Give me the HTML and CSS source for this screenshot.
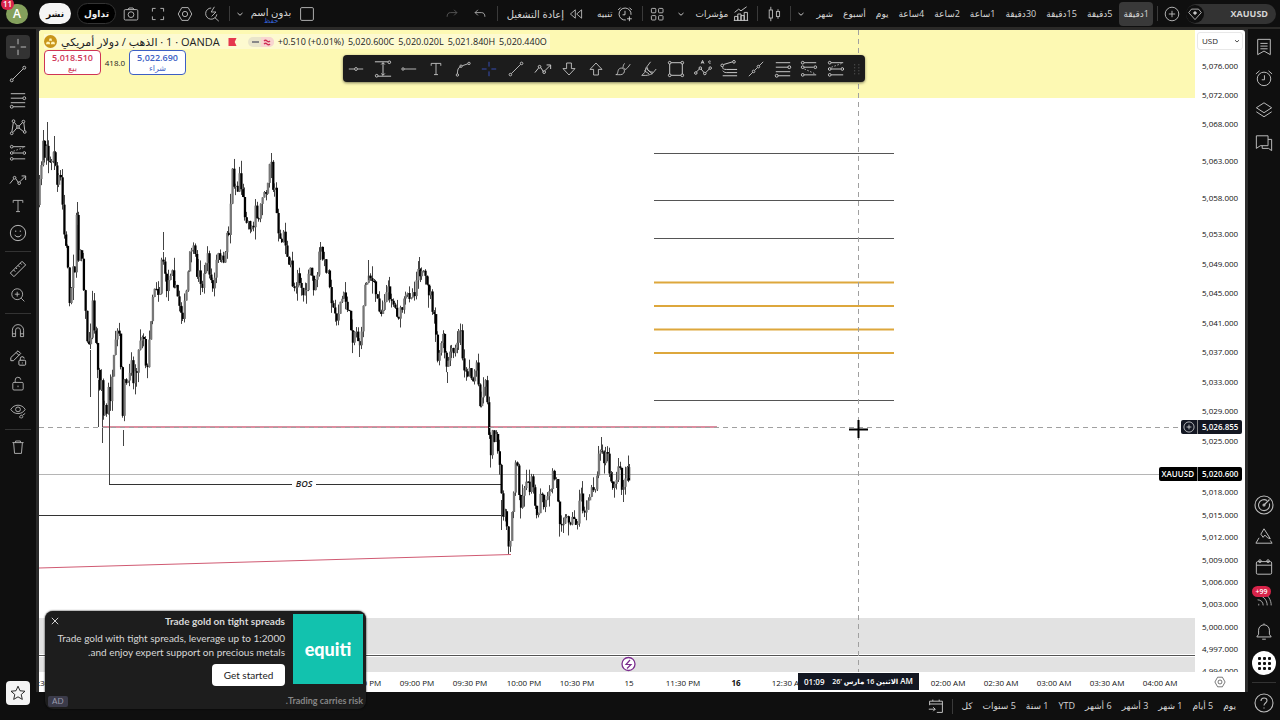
FILE: index.html
```html
<!DOCTYPE html>
<html lang="ar">
<head>
<meta charset="utf-8">
<title>XAUUSD</title>
<link rel="stylesheet" href="styles.css">
</head>
<body>
<svg class="defs" aria-hidden="true">
  <symbol id="cross" viewBox="0 0 20 20"><path d="M10 1v6M10 13v6M1 10h6M13 10h6"/></symbol>
  <symbol id="trend" viewBox="0 0 20 20"><path d="M4.2 15.8L15.8 4.2"/><circle cx="3" cy="17" r="1.6"/><circle cx="17" cy="3" r="1.6"/></symbol>
  <symbol id="fib" viewBox="0 0 20 20"><path d="M2 3h16M2 8h13.500M2 13h16M4.500 17.500H18"/><circle cx="17" cy="8" r="1.600"/><circle cx="3" cy="17.500" r="1.600"/></symbol>
  <symbol id="xabcd" viewBox="0 0 20 20"><path d="M3.200 15.500L4.800 5M6 4.800L9 8.800M11 11l5 4M11.200 9L15 5M16.500 5.500l1 8.500M4.500 16L8.800 11"/><circle cx="3" cy="17" r="1.500"/><circle cx="5" cy="3.500" r="1.500"/><circle cx="10" cy="10" r="1.500"/><circle cx="16" cy="4" r="1.500"/><circle cx="17.500" cy="15.500" r="1.500"/></symbol>
  <symbol id="shortpos" viewBox="0 0 20 20"><path d="M4.500 3H18M4.500 10H15M4.500 16.500H18"/><path d="M5 8l11-4" stroke-dasharray="1.500 2"/><circle cx="3" cy="3" r="1.500"/><circle cx="3" cy="10" r="1.500"/><circle cx="17" cy="10" r="1.500"/><circle cx="3" cy="16.500" r="1.500"/></symbol>
  <symbol id="longpos" viewBox="0 0 20 20"><path d="M4.500 3H18M4.500 8H15M4.500 16.500H18"/><path d="M5 10l11 5" stroke-dasharray="1.500 2"/><circle cx="3" cy="3" r="1.500"/><circle cx="3" cy="8" r="1.500"/><circle cx="17" cy="8" r="1.500"/><circle cx="3" cy="16.500" r="1.500"/></symbol>
  <symbol id="zig" viewBox="0 0 20 20"><path d="M1 14l4-5M7.500 8.500l3 4.500M12 12l6-6M14 5.500h4.500V10"/><circle cx="6.200" cy="7.500" r="1.500"/><circle cx="11.300" cy="13.500" r="1.500"/></symbol>
  <symbol id="text" viewBox="0 0 20 20"><path d="M4 6V3h12v3M10 3v14M7.500 17h5"/></symbol>
  <symbol id="smile" viewBox="0 0 20 20"><circle cx="10" cy="10" r="8.500"/><path d="M6.500 12c1 3 6 3 7 0"/><path d="M7 8h1M12 8h1" stroke-width="1.800"/></symbol>
  <symbol id="ruler" viewBox="0 0 20 20"><path d="M1.500 14.500l13-13 4 4-13 13zM5 11l2 2M7.500 8.500l1.500 1.500M10 6l2 2M12.500 3.500L14 5"/></symbol>
  <symbol id="zoomin" viewBox="0 0 20 20"><circle cx="9" cy="9" r="6.800"/><path d="M14 14l4 4M9 6v6M6 9h6"/></symbol>
  <symbol id="magnet" viewBox="0 0 20 20"><path d="M3 17V9a7 7 0 0 1 14 0v8h-4V9a3 3 0 0 0-6 0v8zM3 13.500h4M13 13.500h4"/></symbol>
  <symbol id="penlock" viewBox="0 0 20 20"><path d="M2 9.500L10 2l3 3-8 8H2zM8 4l3 3"/><rect x="11" y="12.500" width="7.500" height="5.500" rx="1"/><path d="M12.500 12.500v-1.500a2.200 2.200 0 0 1 4.400-.5M14.800 15v1"/></symbol>
  <symbol id="lock" viewBox="0 0 20 20"><rect x="3.500" y="8" width="13" height="9.500" rx="1.500"/><path d="M6.500 8V5.500a3.500 3.500 0 0 1 7-.8M10 12v2"/></symbol>
  <symbol id="eye" viewBox="0 0 20 20"><path d="M1 8c4-7 14-7 18 0-4 7-14 7-18 0z"/><circle cx="10" cy="8" r="3"/><path d="M12 18c0-3 4-4 4-1s-4 1-4 1M16 15l3-2"/></symbol>
  <symbol id="trash" viewBox="0 0 20 20"><path d="M3 4.500h14M7 4.500v-2h6v2M4.500 4.500l1.200 13.500h8.600l1.200-13.500"/></symbol>
  <symbol id="star" viewBox="0 0 20 20"><path d="M10 1.500l2.500 5.700 6.200.6-4.700 4.100 1.400 6.100L10 14.800 4.600 18 6 11.900 1.300 7.800l6.200-.6z"/></symbol>
  <symbol id="hline" viewBox="0 0 20 20"><path d="M1 10h7M12 10h7"/><circle cx="10" cy="10" r="1.800"/></symbol>
  <symbol id="range" viewBox="0 0 20 20"><path d="M1 2h14.500M4.500 18H19M10 3v14M8 5l2-2 2 2M8 15l2 2 2-2"/><circle cx="17" cy="2.500" r="1.500"/><circle cx="3" cy="17.500" r="1.500"/></symbol>
  <symbol id="hray" viewBox="0 0 20 20"><path d="M4 10h15"/><circle cx="2.500" cy="10" r="1.500"/></symbol>
  <symbol id="curve" viewBox="0 0 20 20"><path d="M3 16c0-5 1-8 4-9M9 6l7-2.500"/><circle cx="3" cy="17.500" r="1.500"/><circle cx="7.500" cy="6.500" r="1.500"/><circle cx="17.500" cy="3" r="1.500"/></symbol>
  <symbol id="down" viewBox="0 0 20 20"><path d="M7 2.500h6v7h4.500l-7.500 8-7.500-8H7z"/></symbol>
  <symbol id="up" viewBox="0 0 20 20"><path d="M7 17.500h6v-7h4.500l-7.500-8-7.500 8H7z"/></symbol>
  <symbol id="brush" viewBox="0 0 20 20"><path d="M1 17c4 0 1-7 6-8 4-1 6 3 4 6-2 3-6 2-10 2zM10 9c0-3 1-5 2-6M12 11c3-1 5-4 7-7M11 10l1-1"/></symbol>
  <symbol id="marker" viewBox="0 0 20 20"><path d="M6 9l8 7c-3 1-5 2-8 2H1l4-4zM6 9l6-8M14 16l5-6M4 12l6 4M8 8c0 4 3 6 7 6"/></symbol>
  <symbol id="rect" viewBox="0 0 20 20"><rect x="3" y="3" width="14" height="14"/><g class="node"><circle cx="3" cy="3" r="1.500"/><circle cx="17" cy="3" r="1.500"/><circle cx="3" cy="17" r="1.500"/><circle cx="17" cy="17" r="1.500"/></g></symbol>
  <symbol id="waves" viewBox="0 0 20 20"><path d="M2 14l5-5 5 6 6-6M8 4l1.500-3.500L11 4M8.500 3h2M18.500 1.500c-3-2-3 3 0 2"/><g class="node"><circle cx="2" cy="14.500" r="1.400"/><circle cx="7" cy="9" r="1.400"/><circle cx="12" cy="15" r="1.400"/><circle cx="18" cy="9" r="1.400"/></g></symbol>
  <symbol id="fan" viewBox="0 0 20 20"><path d="M4 5l10-3M3 8c0 2 1 2.500 4 2.500h12M3 12c1 1 2 2 4 2h12M3 17.500h16"/><circle cx="2.500" cy="6" r="1.500"/><circle cx="15.500" cy="2" r="1.500"/></symbol>
  <symbol id="xline" viewBox="0 0 20 20"><path d="M1 19l5-5M8.500 11.500l3-3M14 6l5-5"/><circle cx="7" cy="13" r="1.600"/><circle cx="13" cy="7" r="1.600"/></symbol>
  <symbol id="camera" viewBox="0 0 20 20"><rect x="1.500" y="4.500" width="17" height="13" rx="1.500"/><path d="M6 4.500l1.500-2h5l1.500 2"/><circle cx="10" cy="10.800" r="3.600"/></symbol>
  <symbol id="full" viewBox="0 0 20 20"><path d="M3 7V3h4M13 3h4v4M17 13v4h-4M7 17H3v-4"/></symbol>
  <symbol id="hex" viewBox="0 0 20 20"><path d="M6 2h8l4.500 8L14 18H6l-4.500-8z"/><circle cx="10" cy="10" r="3.300"/></symbol>
  <symbol id="flash" viewBox="0 0 20 20"><path d="M9 2.500a7 7 0 1 0 7 8M13.500 14.500L18.500 19M13 1L9 7.500h6L9.500 13"/></symbol>
  <symbol id="chev" viewBox="0 0 20 20"><path d="M5 8l5 4.500L15 8"/></symbol>
  <symbol id="square" viewBox="0 0 20 20"><rect x="2" y="2" width="16" height="16" rx="1.500"/></symbol>
  <symbol id="undo" viewBox="0 0 20 20"><path d="M7 4L3 8l4 4M3 8h9q5 0 5 6"/></symbol>
  <symbol id="redo" viewBox="0 0 20 20"><path d="M13 4l4 4-4 4M17 8H8q-5 0-5 6"/></symbol>
  <symbol id="rewind" viewBox="0 0 20 20"><path d="M9 4v12l-7-6zM18 4v12l-7-6z"/></symbol>
  <symbol id="alarm" viewBox="0 0 20 20"><path d="M11 17.500A7.500 7.500 0 1 1 17.500 11M10 6v5H7M1.500 5l3-3M15.500 2l3 3M15.500 13v6M12.500 16h6"/></symbol>
  <symbol id="clock" viewBox="0 0 20 20"><circle cx="10" cy="11" r="7.500"/><path d="M10.500 7v5H7.500M1 5.500L5 2M15 2l4 3.500"/></symbol>
  <symbol id="grid4" viewBox="0 0 20 20"><rect x="3" y="3" width="5.500" height="5.500" rx="1"/><rect x="12" y="3" width="5.500" height="5.500" rx="1"/><rect x="3" y="12" width="5.500" height="5.500" rx="1"/><rect x="12" y="12" width="5.500" height="5.500" rx="1"/></symbol>
  <symbol id="indic" viewBox="0 0 20 20"><path d="M2 8l5-4 3 2 7-5M2 18v-5h4v5M6 18v-8h4v8M10 18v-6h4v6M14 18V8h4v10M1 18h18"/></symbol>
  <symbol id="candle" viewBox="0 0 20 20"><rect x="4" y="5" width="4" height="10"/><rect x="13" y="7" width="4" height="6"/><path d="M6 1v4M6 15v4M15 4v3M15 13v3"/></symbol>
  <symbol id="plus" viewBox="0 0 20 20"><circle cx="10" cy="10" r="8.500"/><path d="M10 6v8M6 10h8"/></symbol>
  <symbol id="gem" viewBox="0 0 20 20"><path d="M5 3h10l4 5-9 10L1 8z"/><path d="M10 6v5M7.500 8.500h5" stroke-width="2"/></symbol>
  <symbol id="list" viewBox="0 0 20 20"><path d="M3 1.500h14v17l-7-4-7 4zM6 6h8M6 9h8M6 12h8"/></symbol>
  <symbol id="layers" viewBox="0 0 20 20"><path d="M10 2l8.500 5.500L10 13 1.500 7.500zM1.500 12l8.500 5.500 8.500-5.500"/></symbol>
  <symbol id="chat" viewBox="0 0 20 20"><path d="M1.500 2h13v11H6l-4.500 3zM14.500 6h4v12.500L15 16H8v-3"/></symbol>
  <symbol id="radar" viewBox="0 0 20 20"><circle cx="10" cy="10" r="9"/><path d="M13 5.500a5.500 5.500 0 1 0 2.300 3M10 10l5.500-5.500"/><circle cx="10" cy="10" r="1"/></symbol>
  <symbol id="mount" viewBox="0 0 20 20"><path d="M6.500 8L10 2l7 11-3-1-3-3-2 2.500zM4.500 12L1 18h18l-2-3"/></symbol>
  <symbol id="cal" viewBox="0 0 20 20"><rect x="1.500" y="4" width="17" height="14" rx="1.500"/><path d="M1.500 8h17"/><circle cx="5.500" cy="3.500" r="1.500"/><circle cx="14.500" cy="3.500" r="1.500"/></symbol>
  <symbol id="feed" viewBox="0 0 20 20"><path d="M3 17h1" stroke-width="2"/><path d="M2 11c4 0 7 3 7 7M5 6c5 1 9 6 9 12M9 2c6 3 10 9 10 16"/></symbol>
  <symbol id="bell" viewBox="0 0 20 20"><path d="M2 15.500h16l-2-3V8A6 6 0 0 0 4 8v4.500zM8 18h4M10 2V.5"/></symbol>
  <symbol id="help" viewBox="0 0 20 20"><circle cx="10" cy="10" r="9"/><path d="M7 8c0-4 6-4 6-.5 0 2.500-3 2.500-3 5M10 14.500v1"/></symbol>
  <symbol id="goto" viewBox="0 0 20 20"><path d="M2 9V4h16v14h-7M2 7.500h16M6 4V2M14 4V2M1 14h8M6.500 11.500L9 14l-2.500 2.500"/></symbol>
  <symbol id="grip" viewBox="0 0 20 20"><path d="M5 3h2M5 8h2M5 13h2M5 18h2M12 3h2M12 8h2M12 13h2M12 18h2"/></symbol>
  <symbol id="close" viewBox="0 0 20 20"><path d="M2 2l16 16M18 2L2 18"/></symbol>
</svg>

<header class="topbar">
  <button class="avatar" aria-label="A">A<span class="count">11</span></button>
  <button class="pill pill-light">نشر</button>
  <button class="pill pill-dark">تداول</button>
  <div class="tools">
    <button class="ico" aria-label="camera"><svg><use href="#camera"/></svg></button>
    <button class="ico" aria-label="fullscreen"><svg><use href="#full"/></svg></button>
    <button class="ico" aria-label="settings"><svg><use href="#hex"/></svg></button>
    <button class="ico" aria-label="search"><svg><use href="#flash"/></svg></button>
  </div>
  <i class="bar"></i>
  <button class="ico small" aria-label="menu"><svg><use href="#chev"/></svg></button>
  <button class="layout-name" dir="rtl">بدون اسم<span>حفظ</span></button>
  <button class="ico" aria-label="layout"><svg><use href="#square"/></svg></button>
  <span class="spring"></span>
  <button class="ico dim" aria-label="redo"><svg class="s14"><use href="#redo"/></svg></button>
  <button class="ico" aria-label="undo"><svg class="s14"><use href="#undo"/></svg></button>
  <i class="bar bar-gap"></i>
  <button class="lbl replay">إعادة التشغيل<svg class="s14"><use href="#rewind"/></svg></button>
  <button class="lbl alert">تنبيه<svg><use href="#alarm"/></svg></button>
  <i class="bar"></i>
  <button class="ico" aria-label="grid"><svg><use href="#grid4"/></svg></button>
  <button class="ico small" aria-label="more"><svg><use href="#chev"/></svg></button>
  <button class="lbl indic">مؤشرات<svg><use href="#indic"/></svg></button>
  <i class="bar"></i>
  <button class="ico wide" aria-label="candles"><svg><use href="#candle"/></svg></button>
  <i class="bar"></i>
  <button class="ico small" aria-label="intervals"><svg><use href="#chev"/></svg></button>
  <nav class="intervals">
    <button dir="rtl">شهر</button><button dir="rtl">أسبوع</button><button dir="rtl">يوم</button><button dir="rtl">4ساعة</button><button dir="rtl">2ساعة</button><button dir="rtl">1ساعة</button><button dir="rtl">30دقيقة</button><button dir="rtl">15دقيقة</button><button dir="rtl">5دقيقة</button><button dir="rtl" class="on">1دقيقة</button>
  </nav>
  <i class="bar"></i>
  <button class="ico" aria-label="add"><svg><use href="#plus"/></svg></button>
  <button class="symbol"><span class="gem"><svg class="s14"><use href="#gem"/></svg></span>XAUUSD</button>
</header>

<aside class="left">
  <div class="set set-a">
    <button class="on" aria-label="cross"><svg class="s18"><use href="#cross"/></svg></button>
    <button aria-label="line"><svg class="s18"><use href="#trend"/></svg></button>
    <button aria-label="fib"><svg class="s18"><use href="#fib"/></svg></button>
    <button aria-label="pattern"><svg class="s18"><use href="#xabcd"/></svg></button>
    <button aria-label="position"><svg class="s18"><use href="#shortpos"/></svg></button>
    <button aria-label="path"><svg class="s18"><use href="#zig"/></svg></button>
    <button aria-label="text"><svg class="s16"><use href="#text"/></svg></button>
    <button aria-label="emoji"><svg class="s18"><use href="#smile"/></svg></button>
  </div>
  <hr>
  <div class="set set-b">
    <button aria-label="measure"><svg class="s18"><use href="#ruler"/></svg></button>
    <button aria-label="zoom"><svg class="s16"><use href="#zoomin"/></svg></button>
  </div>
  <hr>
  <div class="set set-c">
    <button aria-label="magnet"><svg class="s16"><use href="#magnet"/></svg></button>
    <button aria-label="stay in drawing"><svg class="s18"><use href="#penlock"/></svg></button>
    <button aria-label="lock"><svg class="s16"><use href="#lock"/></svg></button>
    <button aria-label="hide"><svg class="s16"><use href="#eye"/></svg></button>
  </div>
  <hr>
  <button aria-label="delete"><svg class="s16"><use href="#trash"/></svg></button>
  <button class="fav" aria-label="favorites"><svg class="s16"><use href="#star"/></svg></button>
</aside>

<main class="center">
  <section class="panel">
    <svg class="plot" role="img" aria-label="XAUUSD">
      <rect width="100%" height="68" fill="#fdf9b3"/>
      <rect y="588" width="100%" height="54" fill="#e2e2e2"/>
      <path d="M0 625.500H4000" stroke="#fff" stroke-width="3"/>
      <path d="M0 625.500H4000" stroke="#555"/>
      <path d="M0 444.500H4000" stroke="#b5b5b5"/>
      <path d="M70 454.500H253M277 454.500H462M0 485.500H464" stroke="#333"/>
      <path d="M64 397H678" stroke="#dc8ea0" stroke-width="2"/>
      <path d="M0 538L472 524.500" stroke="#d05a72"/>
      <path d="M615 123.500h240M615 170.500h240M615 208.500h240M615 370.500h240" stroke="#555"/>
      <path d="M615 252.500h240M615 276h240M615 299.500h240M615 323h240" stroke="#dda73c" stroke-width="2"/>
      <text class="bos" x="265" y="457" text-anchor="middle">BOS</text>
      <g id="candles"></g>
      <path d="M0 397.500H4000M819.500 0V642" stroke="#a0a0a0" stroke-dasharray="5 4"/>
      <path d="M819.500 390v18M810 399.500h19" stroke="#000" stroke-width="2"/>
      <circle cx="589.500" cy="634" r="6.500" fill="#fff" stroke="#7b2d8e" stroke-width="1.300"/>
      <path d="M591 630l-4 4.500h5l-4 4" fill="none" stroke="#7b2d8e" stroke-width="1.200"/>
    </svg>
    <svg class="prices" id="prices"></svg>
    <svg class="times" id="times"></svg>
    <div class="corner"><svg class="s12"><use href="#hex"/></svg></div>

    <div class="legend">
      <div class="legend-row">
        <svg class="gold" viewBox="0 0 12 12"><circle cx="6" cy="6" r="6" fill="#c8951a"/><path d="M4.500 5.200l.6-2h1.800l.6 2zM1.800 8.500l.7-2.300h2.600l.6 2.300zM6.300 8.500l.6-2.300h2.600l.7 2.300z" fill="#fff4b8"/></svg>
        <h1><bdi>الذهب / دولار أمريكي</bdi> · 1 · OANDA</h1>
        <svg class="flag" viewBox="0 0 9 9"><path d="M0 0h9L7 4.500 9 9H0z" fill="#e5374d"/></svg>
        <svg class="status" viewBox="0 0 26 10"><rect width="26" height="10" rx="5" fill="#e9e5ca"/><path d="M13 0h8a5 5 0 0 1 0 10h-8z" fill="#f8d5d0"/><path d="M4 5h7" stroke="#888" stroke-width="2"/><path d="M16 4q1.500-1.500 3 0t3 0M16 7q1.500-1.500 3 0t3 0" fill="none" stroke="#cf2f55" stroke-width="1.300"/></svg>
        <span class="vals"><span>+0.510 (+0.01%)</span><span>5,020.600C</span><span>5,020.020L</span><span>5,021.840H</span><span>5,020.440O</span></span>
      </div>
      <div class="deal">
        <button class="sell">5,018.510<span>بيع</span></button>
        <span class="spread">418.0</span>
        <button class="buy">5,022.690<span>شراء</span></button>
      </div>
    </div>

    <div class="drawbar">
      <button aria-label="horizontal line"><svg><use href="#hline"/></svg></button>
      <button aria-label="price range"><svg class="s18"><use href="#range"/></svg></button>
      <button aria-label="ray"><svg><use href="#hray"/></svg></button>
      <button aria-label="text"><svg><use href="#text"/></svg></button>
      <button aria-label="curve"><svg><use href="#curve"/></svg></button>
      <button class="active" aria-label="cross"><svg><use href="#cross"/></svg></button>
      <button aria-label="trend"><svg><use href="#trend"/></svg></button>
      <button aria-label="path"><svg class="s18"><use href="#zig"/></svg></button>
      <button aria-label="down"><svg><use href="#down"/></svg></button>
      <button aria-label="up"><svg><use href="#up"/></svg></button>
      <button aria-label="brush"><svg><use href="#brush"/></svg></button>
      <button aria-label="highlighter"><svg><use href="#marker"/></svg></button>
      <button aria-label="rectangle"><svg class="s18"><use href="#rect"/></svg></button>
      <button aria-label="abc"><svg class="s18"><use href="#waves"/></svg></button>
      <button aria-label="speed fan"><svg class="s18"><use href="#fan"/></svg></button>
      <button aria-label="extended"><svg><use href="#xline"/></svg></button>
      <button aria-label="fib"><svg class="s18"><use href="#fib"/></svg></button>
      <button aria-label="long"><svg class="s18"><use href="#longpos"/></svg></button>
      <button aria-label="short"><svg class="s18"><use href="#shortpos"/></svg></button>
      <span class="grip"><svg class="s12"><use href="#grip"/></svg></span>
    </div>

    <select class="currency" aria-label="currency"><option>USD</option></select>
    <svg class="currency-arrow s8"><use href="#chev"/></svg>
    <div class="tag tag-cross"><svg class="s12"><use href="#plus"/></svg><b>5,026.855</b></div>
    <div class="tag tag-last"><span>XAUUSD</span><b>5,020.600</b></div>
    <div class="time-tag"><span>01:09</span><span><bdi dir="rtl">الاثنين 16 مارس '26</bdi> AM</span></div>
  </section>
  <footer class="bottom">
    <button aria-label="go to"><svg><use href="#goto"/></svg></button>
    <i class="bar"></i>
    <button dir="rtl">كل</button><button dir="rtl">5 سنوات</button><button dir="rtl">1 سنة</button><button>YTD</button><button dir="rtl">6 أشهر</button><button dir="rtl">3 أشهر</button><button dir="rtl">1 شهر</button><button dir="rtl">5 أيام</button><button dir="rtl">يوم</button>
  </footer>
</main>

<aside class="right">
  <button aria-label="watchlist"><svg class="s18"><use href="#list"/></svg></button>
  <button aria-label="alerts"><svg class="s18"><use href="#clock"/></svg></button>
  <button aria-label="objects"><svg class="s18"><use href="#layers"/></svg></button>
  <button aria-label="chat"><svg class="s18"><use href="#chat"/></svg></button>
  <span class="spring"></span>
  <button aria-label="screener"><svg class="s20"><use href="#radar"/></svg></button>
  <button aria-label="pine"><svg class="s18"><use href="#mount"/></svg></button>
  <button aria-label="calendar"><svg class="s18"><use href="#cal"/></svg></button>
  <button class="feed" aria-label="feed"><svg class="s16"><use href="#feed"/></svg><span class="badge">+99</span></button>
  <button aria-label="notifications"><svg class="s18"><use href="#bell"/></svg></button>
  <button class="apps" aria-label="apps"><i></i><i></i><i></i><i></i><i></i><i></i><i></i><i></i><i></i></button>
  <hr>
  <button aria-label="help"><svg class="s20"><use href="#help"/></svg></button>
</aside>

<section class="ad">
  <button class="ad-close" aria-label="close"><svg class="s8"><use href="#close"/></svg></button>
  <div class="ad-copy">
    <h2>Trade gold on tight spreads</h2>
    <p dir="rtl">Trade gold with tight spreads, leverage up to 1:2000<br>and enjoy expert support on precious metals.</p>
    <button class="cta">Get started</button>
  </div>
  <div class="brand">equiti</div>
  <span class="ad-mark">AD</span>
  <small dir="rtl">Trading carries risk.</small>
</section>
<script src="chart.js"></script>
</body>
</html>
```
FILE: styles.css
```css
* { box-sizing: border-box; }
body {
  margin: 0;
  height: 100vh;
  overflow: hidden;
  display: grid;
  grid-template-columns: 36px 1fr 32px;
  grid-template-rows: 29px 1fr;
  background: #0f0f0f;
  color: #d6d6d6;
  font: 10px/12px "Open Sans", "Noto Sans", "DejaVu Sans", sans-serif;
}
.defs { position: absolute; width: 0; height: 0; }
button {
  margin: 0; padding: 0; border: 0; background: none;
  color: inherit; font: inherit; white-space: nowrap;
}
svg { display: block; }
button svg, .corner svg, .tag svg, .grip svg, .currency-arrow {
  width: 16px; height: 16px; flex: none;
  fill: none; stroke: currentColor; stroke-width: 1.1;
}
svg.s8 { width: 8px; height: 8px; stroke-width: 2; }
svg.s12 { width: 12px; height: 12px; }
svg.s14 { width: 14px; height: 14px; }
svg.s16 { width: 16px; height: 16px; }
svg.s18 { width: 18px; height: 18px; }
svg.s20 { width: 20px; height: 20px; }
.node { fill: #1c1c1c; }

.topbar {
  grid-column: 1 / -1;
  display: flex; align-items: center;
  padding: 0 4px 0 6px;
  border-bottom: 2px solid #2b2a28;
}
.avatar {
  position: relative; width: 22px; height: 20px; border-radius: 10px;
  background: #84a05c; color: #fff; font-size: 12px; font-weight: 600;
}
.count {
  position: absolute; left: -5px; top: -6px; width: 13px; height: 12px; border-radius: 6px;
  background: #d8244a; font-size: 8px; line-height: 12px;
}
.pill { height: 21px; border-radius: 11px; font-size: 9px; font-weight: 600; }
.pill-light { width: 32px; margin-left: 11px; background: #f5f5f5; color: #111; }
.pill-dark { width: 39px; margin-left: 6px; background: #000; border: 1px solid #333; color: #eee; }
.tools { display: flex; gap: 9px; margin: 0 8px 0 6px; }
.tools .ico { width: 18px; }
.ico { width: 28px; display: flex; justify-content: center; align-items: center; color: #c4c4c4; }
.ico.small { width: 20px; }
.ico.small svg { width: 10px; height: 10px; stroke-width: 2; }
.ico.wide { width: 32px; }
.dim { color: #666; }
.bar { width: 1px; height: 15px; background: #3a3a3a; flex: none; }
.bar-gap { margin-left: 3px; }
.layout-name { position: relative; width: 42px; height: 22px; padding-bottom: 4px; }
.layout-name span { position: absolute; left: 0; right: 0; top: 13px; color: #3462d8; font-size: 7px; line-height: 10px; }
.layout-name + .ico { width: 30px; }
.spring { flex: 1; }
.lbl { display: flex; align-items: center; gap: 5px; font-size: 9px; }
.replay { padding: 0 6px 0 9px; font-size: 10px; }
.alert { padding: 0 9px 0 8px; }
.indic { padding: 0 8px 0 4px; }
.intervals { display: flex; gap: 2px; font-size: 9px; margin-left: 1px; }
.intervals button { height: 24px; padding: 0 4px; border-radius: 4px; }
.intervals .on { background: #393939; margin: 0 4px 0 1px; }
.symbol {
  display: flex; align-items: center; justify-content: space-between;
  width: 90px; height: 20px; padding-right: 8px;
  border-radius: 10px; background: #333; font-size: 9px; font-weight: 700;
}
.gem { width: 18px; height: 18px; border-radius: 9px; background: #0f0f0f; display: grid; place-items: center; }

.left { display: flex; flex-direction: column; align-items: center; padding: 6px 0 15px; color: #bbb; }
.left button { width: 24px; height: 24px; display: grid; place-items: center; border-radius: 4px; flex: none; }
.left .on { background: #333; }
.set { display: flex; flex-direction: column; justify-content: space-between; }
.set-a { height: 210px; }
.set-b { height: 50px; }
.set-c { height: 104px; }
hr { width: 26px; height: 1px; margin: 6px 0 5px; border: 0; background: #333; flex: none; }
.left .fav { margin-top: auto; background: #f4f4f4; color: #111; }

.center { display: flex; flex-direction: column; padding: 1px 3px 0; background: #2b2b2b; min-width: 0; }
.panel {
  position: relative; flex: 1; min-height: 0;
  display: grid; grid-template: 1fr 20px / 1fr 50px;
  background: #fff; color: #222; border-radius: 3px 3px 0 0; overflow: hidden;
}
.plot, .prices, .times { width: 100%; height: 100%; overflow: hidden; min-width: 0; min-height: 0; }
.plot .bos { font: italic 600 9px/12px "Open Sans", sans-serif; fill: #222; }
.prices text, .times text { font-size: 8px; font-weight: 500; fill: #111; }
.times .day { font-weight: 700; }
.corner { display: grid; place-items: center; color: #333; }
.up { fill: #777; }
.fall { fill: #000; }
.wick { stroke: #444; fill: none; }

.legend { position: absolute; left: 5px; top: 4px; }
.legend-row { display: flex; align-items: center; height: 15px; padding-right: 3px; background: #fdfad0; }
.gold { width: 13px; height: 13px; margin-right: 4px; }
.legend h1 { margin: 0; font-size: 11px; line-height: 15px; font-weight: 500; white-space: nowrap; }
.flag { width: 9px; height: 8px; margin: 0 11px 0 8px; }
.status { width: 26px; height: 10px; }
.vals { display: flex; gap: 4px; margin-left: 4px; font-size: 9px; white-space: nowrap; }
.deal { display: flex; align-items: center; margin-top: 1px; }
.deal button {
  width: 57px; height: 25px; border: 1px solid; border-radius: 4px; background: #fff;
  font-size: 9px; line-height: 11px; font-weight: 600;
}
.deal button span { display: block; font-size: 8px; line-height: 10px; font-weight: 400; }
.sell { color: #cf3455; }
.buy { color: #3d5fc4; }
.spread { width: 28px; text-align: center; font-size: 8px; }

.drawbar {
  position: absolute; left: 304px; top: 25px; width: 522px; height: 27px;
  display: flex; align-items: center; justify-content: space-between; padding: 0 2px 0 4px;
  border-radius: 4px; background: #1c1c1c; color: #c8c8c8; box-shadow: 0 1px 3px rgba(0, 0, 0, .5);
}
.drawbar button { width: 18px; height: 24px; display: grid; place-items: center; }
.drawbar .active { color: #3c55c8; }
.grip { width: 12px; margin-left: -3px; color: #777; }

.currency {
  position: absolute; right: 2px; top: 2px; width: 46px; height: 18px; padding: 0 4px;
  appearance: none; border: 1px solid #e8e8e8; border-radius: 3px; background: #fff;
  color: #222; font: 8px/12px "Open Sans", sans-serif;
}
.currency-arrow { position: absolute; right: 4px; top: 7px; color: #222; }
.tag { position: absolute; right: 3px; display: flex; align-items: center; height: 14px; background: #000; color: #fff; font-size: 8px; border-radius: 2px; }
.tag b { width: 45px; padding-left: 4px; border-left: 1px solid #888; font-weight: 600; line-height: 14px; }
.tag-cross { top: 390px; background: #131722; }
.tag-cross svg { margin: 0 2px; }
.tag-last { top: 437px; }
.tag-last span { padding: 0 3px; font-weight: 600; }
.time-tag {
  position: absolute; left: 759px; bottom: 2px; width: 121px; height: 17px;
  display: flex; justify-content: space-between; align-items: center; padding: 0 6px;
  background: #131722; color: #fff; font-size: 8px; font-weight: 600; white-space: nowrap;
}
.time-tag bdi { font-size: 7px; }

.bottom { display: flex; align-items: center; justify-content: flex-end; gap: 10px; height: 28px; margin: 0 -3px; padding: 0 12px 0 0; background: #0f0f0f; font-size: 9px; }
.bottom .bar { margin: 0 -2px; }

.right { display: flex; flex-direction: column; align-items: center; padding: 2px 0 2px; color: #bbb; }
.right button { position: relative; width: 32px; height: 31px; display: grid; place-items: center; flex: none; }
.right button:nth-of-type(3), .right button:nth-of-type(4) { height: 33px; }
.badge { position: absolute; left: 4px; top: 4px; width: 19px; height: 11px; border-radius: 6px; background: #d8244a; color: #fff; font-size: 7px; line-height: 11px; font-weight: 600; }
.right .feed { height: 34px; }
.right .apps { width: 24px; height: 24px; margin-top: 4px; border-radius: 12px; background: #fff; grid-template: repeat(3, 4px) / repeat(3, 4px); gap: 1px; place-content: center; }
.apps i { width: 3px; height: 3px; background: #111; border-radius: 1px; }
.right hr { width: 24px; margin: 7px 0 5px; }
.right button:last-child { height: 30px; }

.ad {
  position: absolute; left: 45px; bottom: 11px; width: 321px; height: 98px;
  display: grid; grid-template: 1fr 18px / minmax(0, 1fr) 70px; column-gap: 8px; padding: 3px 3px 2px 10px;
  border-radius: 8px; background: #1d1d1d; color: #d8d8d8; box-shadow: 0 0 2px #000;
  font-family: Lato, "Open Sans", sans-serif;
}
.ad-close { position: absolute; left: 4px; top: 4px; width: 11px; height: 11px; display: grid; place-items: center; color: #fff; }
.ad-copy { display: flex; flex-direction: column; align-items: flex-end; }
.ad-copy h2 { margin: 0 0 3px; font-size: 10px; line-height: 14px; font-weight: 700; }
.ad-copy p { margin: 0; font-size: 10px; line-height: 14px; text-align: right; white-space: nowrap; }
.cta { width: 73px; height: 22px; margin-top: 5px; flex: none; border-radius: 4px; background: #fff; color: #222; font-size: 10px; }
.brand { height: 70px; background: #12c2ae; color: #fff; font: 900 18px/70px Lato, "Open Sans", sans-serif; text-align: center; }
.ad-mark { position: absolute; left: 3px; bottom: 2px; padding: 0 4px; border-radius: 2px; background: #3b3b4a; color: #9a9aaa; font-size: 8px; line-height: 11px; }
.ad small { position: absolute; right: 3px; bottom: 1px; color: #858585; font-size: 9px; line-height: 14px; font-weight: 700; }
```
FILE: chart.js
```js
const NS = 'http://www.w3.org/2000/svg';
function add(parent, tag, attrs, text) {
  const el = document.createElementNS(NS, tag);
  for (const k in attrs) el.setAttribute(k, attrs[k]);
  if (text) el.textContent = text;
  parent.appendChild(el);
}

// Turning points of the price line: x, y pairs.
const path = [38,205,40,185,42,162,43.5,138,45,158,47,140,49,160,52,167,54,148,56,166,58,190,60,175,62,182,63,205,65,238,67,252,69,270,70,305,72,285,74,256,75,290,76.5,212,78,232,79,260,81,243,83,262,85,298,87,330,89,352,91,340,93,300,94,335,96,327,98,368,100,388,101.5,360,103,425,105,400,107,420,109,390,111,398,113,378,115,352,117,340,119,327,121,350,122.5,430,124,388,126,378,128,392,130,370,132,353,133,394,135,370,138,366,140,340,144,330,146,360,148,371,149.5,345,151,323,153,296,156,282,158,290,160,298,162,260,163,247,165,276,168,290,170,275,173,264,175,288,177,292,180,305,183,315,186,302,188,280,190,260,192,246,195,254,198,276,200,272,202,286,204,285,206,260,208,258,211,277,213,290,215,283,217,262,220,254,223,262,225,272,226.5,230,229,238,231,205,233,170,236,192,237,178,238,193,240,173,243,196,245,212,248,220,252,228,254,228,256,200,259,229,262,200,265,188,268,188,269,165,271,158,272,160,273,188,276,190,278,230,280,245,282,240,285,230,287,255,290,272,291,258,293,283,296,290,298,268,301,285,305,298,308,285,312,262,313,288,317,283,319,260,321,247,324,262,328,270,331,285,333,310,335,314,338,317,341,303,344,295,348,306,350,318,353,338,356,328,360,344,362,340,363,318,364,300,365,288,367,284,369,270,372,280,375,288,378,300,382,314,385,298,388,290,392,297,396,310,400,316,404,305,407,297,411,293,415,292,417,280,418,260,421,274,425,277,427,287,431,294,434,315,436,328,437,345,439,367,441,350,443,331,447,372,450,352,455,355,458,340,461,327,462,345,464,363,467,377,470,365,473,385,477,360,479,385,481,403,484,390,486,375,488,408,489,425,491,453,493,434,497,440,499,457,501,480,503,510,506,513,507,530,509,545,510,553,511,535,512,510,514,500,515,475,517,457,519,480,521,508,524,495,526,473,528,485,530,490,532,475,534,482,536,512,538,525,540,500,542,495,545,508,548,500,551,492,553,471,556,482,558,480,559,510,560,519,563,520,570,518,573,520,577,522,579,518,581,487,583,508,587,512,590,500,592,487,597,485,598,465,601,445,603,447,605,462,607,450,609,460,611,485,615,487,617,480,620,465,622,490,625,480,627,470,629,475];
const wicks = [43,130,160,47,122,160,54,136,170,77,202,225,90,350,397,98,380,427,102,400,443,109,400,484,123,430,446,163,232,250,271,153,165,320,242,260,368,260,280,359,340,357,419,257,270,447,372,383,460,326,345,501,500,530,563,518,533,601,437,450,623,485,502,629,464,478];
const g = document.getElementById('candles');
function priceAt(x) {
  for (let i = 2; i < path.length; i += 2) {
    if (x <= path[i]) {
      const t = (x - path[i - 2]) / (path[i] - path[i - 2]);
      return path[i - 1] + t * (path[i + 1] - path[i - 1]);
    }
  }
  return path[path.length - 1];
}
let seed = 7;
const rand = () => (seed = seed * 16807 % 2147483647) / 2147483647;
let prev = 205;
for (let x = 39; x < 629; x += 1.77) {
  const y = priceAt(x + 1) + (rand() - .5) * 12;
  const top = Math.min(prev, y), h = Math.max(1, Math.abs(prev - y));
  const px = x - 39;
  const a = rand() * rand() * 15, b = rand() * rand() * 15;
  add(g, 'path', { class: 'wick', d: `M${Math.round(px) + .5} ${top - 30 - a}V${top + h - 30 + b}` });
  add(g, 'rect', { class: y < prev ? 'up' : 'fall', x: px - .5, y: top - 30, width: 2.3, height: h });
  prev = y;
}
for (let i = 0; i < wicks.length; i += 3) {
  add(g, 'path', { class: 'wick', d: `M${wicks[i] - 38.5} ${wicks[i + 1] - 30}V${wicks[i + 2] - 30}` });
}

const prices = [['5,076.000',66],['5,072.000',95],['5,068.000',124],['5,063.000',161],['5,058.000',198],['5,053.000',234],['5,049.000',264],['5,045.000',293],['5,041.000',323],['5,037.000',352],['5,033.000',382],['5,029.000',411],['5,025.000',441],['5,021.000',470],['5,018.000',492],['5,015.000',515],['5,012.000',537],['5,009.000',560],['5,006.000',582],['5,003.000',604],['5,000.000',627],['4,997.000',649],['4,994.000',671]];
for (const [t, y] of prices) add(document.getElementById('prices'), 'text', { x: 7, y: y - 27 }, t);

const times = [['05:30 PM',46],['08:30 PM',364],['09:00 PM',417],['09:30 PM',470],['10:00 PM',524],['10:30 PM',577],['15',629],['11:30 PM',683],['16',736],['12:30 AM',789],['02:00 AM',948],['02:30 AM',1001],['03:00 AM',1054],['03:30 AM',1107],['04:00 AM',1160]];
for (const [t, x] of times) {
  add(document.getElementById('times'), 'text', { x: x - 39, y: 14, 'text-anchor': 'middle', class: t === '16' ? 'day' : 'hour' }, t);
}
```
